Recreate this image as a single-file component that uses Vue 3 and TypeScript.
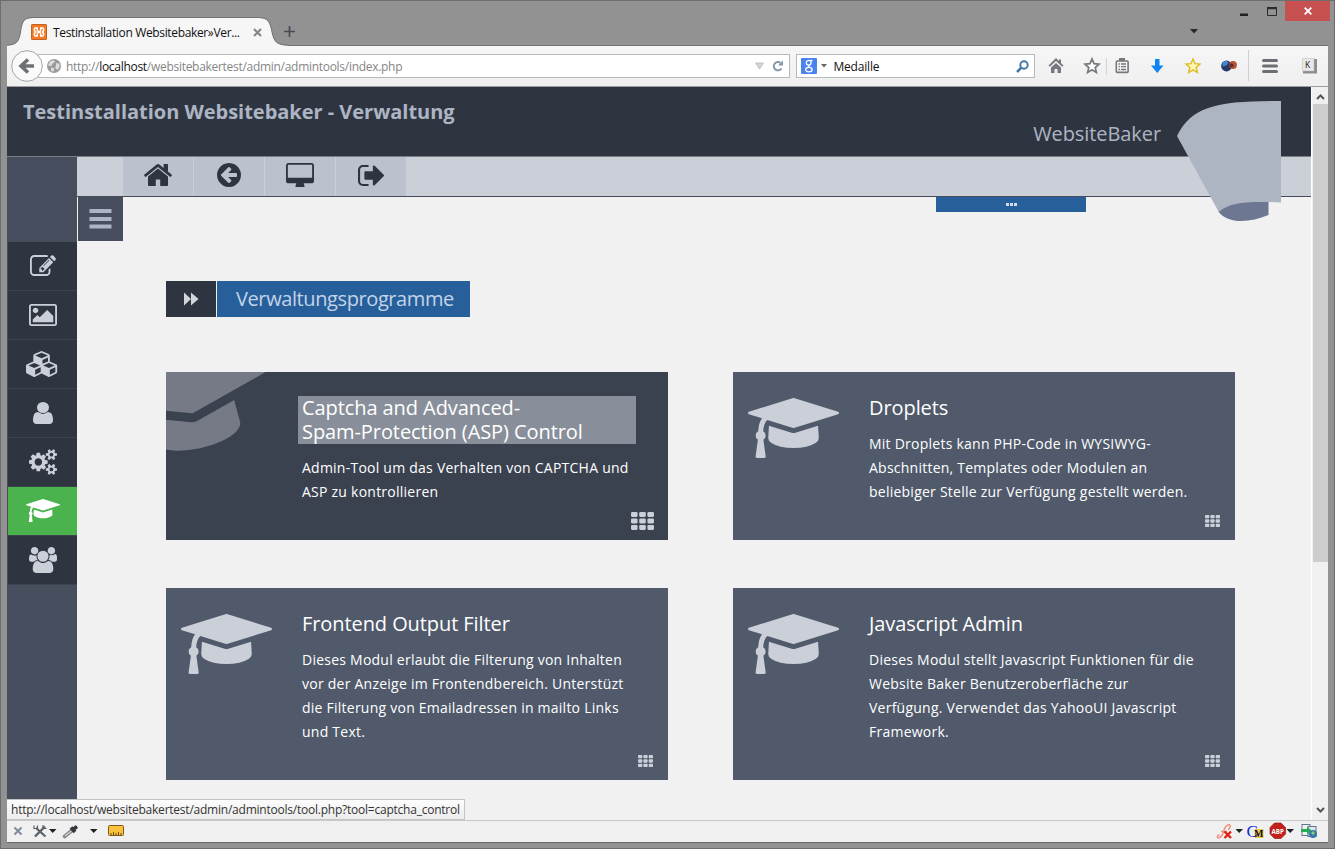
<script setup lang="ts">
interface Glyph {
  box: string
  w: number
  h: number
  d: string
}

interface Tool {
  title: string[]
  text: string[]
  active?: boolean
}

const cap =
  'M1774 836l18 316q4 69-82 128t-235 93.5-323 34.5-323-34.5-235-93.5-82-128l18-316 574 181q22 7 48 7t48-7zm530-324q0 23-22 31l-1120 352q-4 1-10 1t-10-1l-652-206q-43 34-71 111.5t-34 178.5q63 36 63 109 0 69-58 107l58 433q2 14-8 25-9 11-24 11h-192q-15 0-24-11-10-11-8-25l58-433q-58-38-58-107 0-73 65-111 11-207 98-330l-333-104q-22-8-22-31t22-31l1120-352q4-1 10-1t10 1l1120 352q22 8 22 31z'

const quick: Glyph[] = [
  {
    box: '89 253 1614 1283',
    w: 28,
    h: 22,
    d: 'M1472 992v480q0 26-19 45t-45 19h-384v-384h-256v384h-384q-26 0-45-19t-19-45v-480q0-1 .5-3t.5-3l575-474 575 474q1 2 1 6zm223-69l-62 74q-8 9-21 11h-3q-13 0-21-7l-692-577-692 577q-12 8-24 7-13-2-21-11l-62-74q-8-10-7-23.5t11-21.5l719-599q32-26 76-26t76 26l244 204v-195q0-14 9-23t23-9h192q14 0 23 9t9 23v408l219 182q10 8 11 21.5t-7 23.5z',
  },
  {
    box: '128 128 1536 1536',
    w: 24,
    h: 24,
    d: 'M1408 960v-128q0-26-19-45t-45-19h-502l189-189q19-19 19-45t-19-45l-91-91q-18-18-45-18t-45 18l-362 362-91 91q-18 18-18 45t18 45l91 91 362 362q18 18 45 18t45-18l91-91q18-18 18-45t-18-45l-189-189h502q26 0 45-19t19-45zm256-64q0 209-103 385.5t-279.5 279.5-385.5 103-385.5-103-279.5-279.5-103-385.5 103-385.5 279.5-279.5 385.5-103 385.5 103 279.5 279.5 103 385.5z',
  },
  {
    box: '-64 0 1920 1664',
    w: 28,
    h: 24,
    d: 'M1728 992v-832q0-13-9.5-22.5t-22.5-9.5h-1600q-13 0-22.5 9.5t-9.5 22.5v832q0 13 9.5 22.5t22.5 9.5h1600q13 0 22.5-9.5t9.5-22.5zm128-832v1088q0 66-47 113t-113 47h-544q0 37 16 77.5t32 71 16 43.5q0 26-19 45t-45 19h-512q-26 0-45-19t-19-45q0-14 16-44t32-70 16-78h-544q-66 0-113-47t-47-113v-1088q0-66 47-113t113-47h1600q66 0 113 47t47 113z',
  },
  {
    box: '64 256 1568 1280',
    w: 26,
    h: 21,
    d: 'M704 1440q0 4 1 20t.5 26.5-3 23.5-10 19.5-20.5 6.5h-320q-119 0-203.5-84.5t-84.5-203.5v-704q0-119 84.5-203.5t203.5-84.5h320q13 0 22.5 9.5t9.5 22.5q0 4 1 20t.5 26.5-3 23.5-10 19.5-20.5 6.5h-320q-66 0-113 47t-47 113v704q0 66 47 113t113 47h312l11.5 1 11.5 3 8 5.5 7 9 2 13.5zm928-544q0 26-19 45l-544 544q-19 19-45 19t-45-19-19-45v-288h-448q-26 0-45-19t-19-45v-384q0-26 19-45t45-19h448v-288q0-26 19-45t45-19 45 19l544 544q19 19 19 45z',
  },
]

const side: (Glyph & { current?: boolean })[] = [
  {
    box: '0 122 1792 1414',
    w: 26,
    h: 21,
    d: 'M888 1184l116-116-152-152-116 116v56h96v96h56zm440-720q-16-16-33 1l-350 350q-17 17-1 33t33-1l350-350q17-17 1-33zm80 594v190q0 119-84.5 203.5t-203.5 84.5h-832q-119 0-203.5-84.5t-84.5-203.5v-832q0-119 84.5-203.5t203.5-84.5h832q63 0 117 25 15 7 18 23 3 17-9 29l-49 49q-14 14-32 8-23-6-45-6h-832q-66 0-113 47t-47 113v832q0 66 47 113t113 47h832q66 0 113-47t47-113v-126q0-13 9-22l64-64q15-15 35-7t20 29zm-96-738l288 288-672 672h-288v-288zm444 132l-92 92-288-288 92-92q28-28 68-28t68 28l152 152q28 28 28 68t-28 68z',
  },
  {
    box: '-64 128 1920 1536',
    w: 28,
    h: 22,
    d: 'M576 576q0 80-56 136t-136 56-136-56-56-136 56-136 136-56 136 56 56 136zm1024 384v448h-1408v-192l320-320 160 160 512-512zm96-704h-1600q-13 0-22.5 9.5t-9.5 22.5v1216q0 13 9.5 22.5t22.5 9.5h1600q13 0 22.5-9.5t9.5-22.5v-1216q0-13-9.5-22.5t-22.5-9.5zm160 32v1216q0 66-47 113t-113 47h-1600q-66 0-113-47t-47-113v-1216q0-66 47-113t113-47h1600q66 0 113 47t47 113z',
  },
  {
    box: '0 0 2304 1792',
    w: 33,
    h: 26,
    d: 'M640 1632l384-192v-314l-384 164v342zm-64-454l404-173-404-173-404 173zm1088 454l384-192v-314l-384 164v342zm-64-454l404-173-404-173-404 173zm-448-293l384-165v-266l-384 164v267zm-64-379l441-189-441-189-441 189zm1088 518v416q0 36-19 67t-52 47l-448 224q-25 14-57 14t-57-14l-448-224q-4-2-7-4-2 2-7 4l-448 224q-25 14-57 14t-57-14l-448-224q-33-16-52-47t-19-67v-416q0-38 21.5-70t56.5-48l434-186v-400q0-38 21.5-70t56.5-48l448-192q23-10 50-10t50 10l448 192q35 16 56.5 48t21.5 70v400l434 186q36 16 57 48t21 70z',
  },
  {
    box: '256 128 1280 1536',
    w: 20,
    h: 22,
    d: 'M1536 1399q0 109-62.5 187t-150.5 78h-854q-88 0-150.5-78t-62.5-187q0-85 8.5-160.5t31.5-152 58.5-131 94-89 134.5-34.5q131 128 313 128t313-128q76 0 134.5 34.5t94 89 58.5 131 31.5 152 8.5 160.5zm-256-887q0 159-112.5 271.5t-271.5 112.5-271.5-112.5-112.5-271.5 112.5-271.5 271.5-112.5 271.5 112.5 112.5 271.5z',
  },
  {
    box: '-64 0 1920 1792',
    w: 28,
    h: 26,
    d: 'M832 896q0-106-75-181t-181-75-181 75-75 181 75 181 181 75 181-75 75-181zm768 512q0-52-38-90t-90-38-90 38-38 90q0 53 37.5 90.5t90.5 37.5 90.5-37.5 37.5-90.5zm0-1024q0-52-38-90t-90-38-90 38-38 90q0 53 37.5 90.5t90.5 37.5 90.5-37.5 37.5-90.5zm-384 421v185q0 10-7 19.5t-16 10.5l-155 24q-11 35-32 76 34 48 90 115 7 11 7 20 0 12-7 19-23 30-82.5 89.5t-78.5 59.5q-11 0-21-7l-115-90q-37 19-77 31-11 108-23 155-7 24-30 24h-186q-11 0-20-7.5t-10-17.5l-23-153q-34-10-75-31l-118 89q-7 7-20 7-11 0-21-8-144-133-144-160 0-9 7-19 10-14 41-53t47-61q-23-44-35-82l-152-24q-10-1-17-9.5t-7-19.5v-185q0-10 7-19.5t16-10.5l155-24q11-35 32-76-34-48-90-115-7-11-7-20 0-12 7-20 22-30 82-89t79-59q11 0 21 7l115 90q34-18 77-32 11-108 23-154 7-24 30-24h186q11 0 20 7.5t10 17.5l23 153q34 10 75 31l118-89q8-7 20-7 11 0 21 8 144 133 144 160 0 8-7 19-12 16-42 54t-45 60q23 48 34 82l152 23q10 2 17 10.5t7 19.5zm640 533v140q0 16-149 31-12 27-30 52 51 113 51 138 0 4-4 7-122 71-124 71-8 0-46-47t-52-68q-20 2-30 2t-30-2q-14 21-52 68t-46 47q-2 0-124-71-4-3-4-7 0-25 51-138-18-25-30-52-149-15-149-31v-140q0-16 149-31 13-29 30-52-51-113-51-138 0-4 4-7 4-2 35-20t59-34 30-16q8 0 46 46.5t52 67.5q20-2 30-2t30 2q51-71 92-112l6-2q4 0 124 70 4 3 4 7 0 25-51 138 17 23 30 52 149 15 149 31zm0-1024v140q0 16-149 31-12 27-30 52 51 113 51 138 0 4-4 7-122 71-124 71-8 0-46-47t-52-68q-20 2-30 2t-30-2q-14 21-52 68t-46 47q-2 0-124-71-4-3-4-7 0-25 51-138-18-25-30-52-149-15-149-31v-140q0-16 149-31 13-29 30-52-51-113-51-138 0-4 4-7 4-2 35-20t59-34 30-16q8 0 46 46.5t52 67.5q20-2 30-2t30 2q51-71 92-112l6-2q4 0 124 70 4 3 4 7 0 25-51 138 17 23 30 52 149 15 149 31z',
  },
  { box: '0 128 2304 1536', w: 34, h: 23, d: cap, current: true },
  {
    box: '-64 0 1920 1792',
    w: 28,
    h: 26,
    d: 'M529 896q-162 5-265 128h-134q-82 0-138-40.5t-56-118.5q0-353 124-353 6 0 43.5 21t97.5 42.5 119 21.5q67 0 133-23-5 37-5 66 0 159 90 288zm1071 637q0 120-73 189.5t-194 69.5h-874q-121 0-194-69.5t-73-189.5q0-53 3.5-103.5t14-109 26.5-108.5 43-97.5 62-81 85.5-53.5 111.5-20q10 0 43 21.5t73 48 107 48 135 21.5 135-21.5 107-48 73-48 43-21.5q61 0 111.5 20t85.5 53.5 62 81 43 97.5 26.5 108.5 14 109 3.5 103.5zm-1024-1277q0 106-75 181t-181 75-181-75-75-181 75-181 181-75 181 75 75 181zm704 384q0 159-112.5 271.5t-271.5 112.5-271.5-112.5-112.5-271.5 112.5-271.5 271.5-112.5 271.5 112.5 112.5 271.5zm576 225q0 78-56 118.5t-138 40.5h-134q-103-123-265-128 90-129 90-288 0-29-5-66 66 23 133 23 59 0 119-21.5t97.5-42.5 43.5-21q124 0 124 353zm-128-609q0 106-75 181t-181 75-181-75-75-181 75-181 181-75 181 75 75 181z',
  },
]

const tools: Tool[] = [
  {
    title: ['Captcha and Advanced-', 'Spam-Protection (ASP) Control'],
    text: ['Admin-Tool um das Verhalten von CAPTCHA und', 'ASP zu kontrollieren'],
    active: true,
  },
  {
    title: ['Droplets'],
    text: [
      'Mit Droplets kann PHP-Code in WYSIWYG-',
      'Abschnitten, Templates oder Modulen an',
      'beliebiger Stelle zur Verfügung gestellt werden.',
    ],
  },
  {
    title: ['Frontend Output Filter'],
    text: [
      'Dieses Modul erlaubt die Filterung von Inhalten',
      'vor der Anzeige im Frontendbereich. Unterstüzt',
      'die Filterung von Emailadressen in mailto Links',
      'und Text.',
    ],
  },
  {
    title: ['Javascript Admin'],
    text: [
      'Dieses Modul stellt Javascript Funktionen für die',
      'Website Baker Benutzeroberfläche zur',
      'Verfügung. Verwendet das YahooUI Javascript',
      'Framework.',
    ],
  },
]

const cells = [0, 1, 2, 3, 4, 5, 6, 7, 8].map((i) => ({ x: (i % 3) * 640, y: Math.floor(i / 3) * 512 }))
</script>

<template>
  <div class="window">
    <div class="titlebar">
      <div class="tab">
        <svg class="tab-shape" width="284" height="29" viewBox="0 0 284 29">
          <path d="M0 28.500C9 28.500 12 25 13.500 15C15 4 17 1 26 1H252C260 1 263 4 265 15C267 25 270 28.500 281 28.500V29H0Z" fill="#f6f6f6" />
          <path d="M0 28C9 28 12 25 13.500 15C15 4 17 .5 26 .5H252C260 .5 263 4 265 15C267 25 270 28 281 28" fill="none" stroke="#6f7276" />
        </svg>
        <svg class="favicon" width="16" height="16" viewBox="0 0 16 16">
          <rect width="16" height="16" rx="1.500" fill="#f07a26" />
          <rect x=".5" y=".5" width="15" height="15" rx="1" fill="none" stroke="#c9621f" />
          <path d="M6.300 6V4H4.600Q3.400 4 3.400 5.200V6.500L4.700 8 3.400 9.500V10.800Q3.400 12 4.600 12H6.300V10M9.700 6V4h1.700q1.200 0 1.200 1.200V6.500L11.300 8l1.300 1.500v1.300Q12.600 12 11.400 12H9.700V10M6 6.300Q8 9 10 6.300M6 9.700Q8 7 10 9.700" fill="none" stroke="#fff" stroke-width="1.500" />
        </svg>
        <span class="tab-title">Testinstallation Websitebaker»Ver...</span>
        <svg class="tab-close" width="9" height="9" viewBox="0 0 9 9"><path d="M1 1l7 7M8 1L1 8" stroke="#83878c" stroke-width="2.200" /></svg>
      </div>
      <svg class="plus" width="11" height="11" viewBox="0 0 11 11"><path d="M5.500 0v11M0 5.500h11" stroke="#454c56" stroke-width="1.700" /></svg>
      <svg class="tablist" width="8" height="6" viewBox="0 0 8 6"><path d="M0 1h8L4 5.500z" fill="#26292c" /></svg>
      <div class="controls">
        <svg class="min" width="8" height="3"><rect width="8" height="2.500" y=".5" fill="#222" /></svg>
        <svg class="max" width="10" height="9" viewBox="0 0 10 9"><path d="M.5 1v7.500h9V1" fill="none" stroke="#2b2b2b" stroke-width="1" /><rect width="10" height="2.200" fill="#2b2b2b" /></svg>
        <div class="close"><svg width="8" height="8" viewBox="0 0 8 8"><path d="M.7.7l6.600 6.600M7.300.7L.7 7.300" stroke="#fff" stroke-width="1.800" /></svg></div>
      </div>
    </div>

    <div class="toolbar">
      <svg class="back" width="32" height="32" viewBox="0 0 32 32">
        <circle cx="16" cy="16" r="15.300" fill="#fafafa" stroke="#a3a6aa" />
        <path d="M17 9.500l-7 6.500 7 6.500M10.500 16H23" fill="none" stroke="#6c7176" stroke-width="3.600" />
      </svg>
      <div class="urlbar">
        <svg class="globe" width="14" height="14" viewBox="0 0 14 14">
          <circle cx="7" cy="7" r="7" fill="#9a9a9a" />
          <path d="M3 2.500L6.500 1l1.500 2-2.500 1.500L4.500 7 1 6.500zM9 4l3 .5.800 3L10.500 11 8 8.500 9 6.500zM4 8.500l3.500 1L6 13 4 11.500z" fill="#dedede" />
        </svg>
        <span class="url">http://<b>localhost</b>/websitebakertest/admin/admintools/index.php</span>
        <svg class="drop" width="9" height="8" viewBox="0 0 9 8"><path d="M.6 1h7.800L4.500 7z" fill="#d3d6da" stroke="#b2b6bb" stroke-width=".8" /></svg>
        <svg class="reload" width="12" height="12" viewBox="0 0 12 12"><path d="M9.500 8.500A4.200 4.200 0 1 1 8.500 2.800" fill="none" stroke="#8796a5" stroke-width="1.900" /><path d="M11 .5v5H6z" fill="#8796a5" /></svg>
      </div>
      <div class="search">
        <div class="engine">
          <svg width="16" height="16" viewBox="0 0 16 16"><g fill="none" stroke="#fff" stroke-width="1.300"><circle cx="7.700" cy="4.800" r="2.400" /><ellipse cx="7.900" cy="11.600" rx="3.300" ry="2.300" /><path d="M8.500 7.200q-2 .8 0 2.200M9.500 2.500h2" /></g></svg>
        </div>
        <svg class="engine-drop" width="6" height="4" viewBox="0 0 6 4"><path d="M0 0h6L3 3.500z" fill="#666" /></svg>
        <span class="query">Medaille</span>
        <svg class="lens" width="13" height="13" viewBox="0 0 13 13"><circle cx="8" cy="5" r="3.700" fill="none" stroke="#4475a6" stroke-width="1.900" /><path d="M5.300 7.700L1 12" stroke="#4475a6" stroke-width="2.500" /></svg>
      </div>
      <svg class="actions" width="290" height="32" viewBox="0 0 290 32">
        <g transform="translate(10.500 8)"><path d="M7.500 0L0 7.500l1.300 1.300L7.500 3l6.200 5.800L15 7.500l-2.500-2.600V1.500h-2v1.500z" fill="#75797d" /><path d="M2.500 9.500L7.500 5l5 4.500V15H9v-4H6v4H2.500z" fill="#75797d" /></g>
        <path d="M54 9l2 4.700 5 .4-3.800 3.400 1.200 5-4.400-2.700-4.400 2.700 1.200-5-3.800-3.400 5-.4z" fill="#fff" stroke="#75797d" stroke-width="1.700" />
        <path d="M68.500 8v17" stroke="#d2d2d2" />
        <g fill="none" stroke="#75797d"><rect x="78.300" y="11" width="11.800" height="11.400" rx="1" stroke-width="1.600" /><path d="M81 9.500h6" stroke-width="3" /><path d="M80.500 14h1.500m1 0h5M80.500 16.700h1.500m1 0h5M80.500 19.500h1.500m1 0h5" stroke-width="1.300" /></g>
        <path d="M117 9h4.500v6.500h4L119.200 23 113 15.500h4z" fill="#0e85f2" />
        <path d="M155 9l2 4.700 5 .4-3.800 3.400 1.200 5-4.400-2.700-4.400 2.700 1.200-5-3.800-3.400 5-.4z" fill="#fdf7b5" stroke="#e0bb20" stroke-width="1.400" />
        <circle cx="188.500" cy="16" r="5.400" fill="#273a68" /><path d="M184.500 12.500q3-2.500 6-.5l-2 3.500-4 1z" fill="#4588c9" /><circle cx="195" cy="15" r="3.900" fill="#b65332" /><circle cx="193.500" cy="15.500" r="2" fill="#5b2d31" />
        <path d="M210.500 0v31" stroke="#cfcfcf" />
        <path d="M225.500 10.500h13M225.500 16h13M225.500 21.500h13" stroke="#6b6f73" stroke-width="3" stroke-linecap="round" />
        <rect x="265" y="9" width="14" height="14.500" fill="#8d8d8d" /><rect x="264.500" y="8.500" width="11.500" height="12.500" fill="#e9e9e9" stroke="#b8b8b8" stroke-width=".5" />
        <text x="267" y="18" font-size="8.500" fill="#111">K</text>
      </svg>
    </div>

    <div class="viewport">
      <div class="page">
        <header class="head">
          <h1>Testinstallation Websitebaker - Verwaltung</h1>
          <span class="brand">WebsiteBaker</span>
          <svg class="logo" width="106" height="122" viewBox="0 0 106 122">
            <path d="M41.500 111.700C48 100 68 100 91.500 101V115C72 123 51 124 41.500 111.700Z" fill="#6d7792" />
            <path d="M0 36C15 6 40 .8 104 1V102.500L91 102C68 101.500 51 103 41.800 112Z" fill="#adb4c2" />
          </svg>
        </header>
        <div class="body">
          <nav class="side">
            <div v-for="(g, i) in side" :key="i" class="side-item" :class="{ current: g.current }">
              <svg :width="g.w" :height="g.h" :viewBox="g.box" preserveAspectRatio="none"><path :d="g.d" fill="currentColor" /></svg>
            </div>
          </nav>
          <main class="main">
            <div class="quick">
              <div v-for="(g, i) in quick" :key="i" class="quick-item">
                <svg :width="g.w" :height="g.h" :viewBox="g.box" preserveAspectRatio="none"><path :d="g.d" fill="currentColor" /></svg>
              </div>
            </div>
            <div class="strip">
              <div class="menu">
                <svg width="23" height="20" viewBox="0 0 23 20"><path d="M.5 2h22M.5 10h22M.5 17.500h22" stroke="#adb4c3" stroke-width="4" /></svg>
              </div>
              <div class="handle"><i></i><i></i><i></i></div>
            </div>
            <div class="crumb">
              <div class="crumb-icon">
                <svg width="15" height="14" viewBox="0 0 15 14"><path d="M0 .5L7 7 0 13.500zM7 .5L14.500 7 7 13.500z" fill="#d2d5db" /></svg>
              </div>
              <div class="crumb-text">Verwaltungsprogramme</div>
            </div>
            <div class="cards">
              <article v-for="t in tools" :key="t.title[0]" class="card" :class="{ active: t.active }">
                <svg v-if="t.active" class="big-cap" width="132" height="168" viewBox="0 0 132 168">
                  <path :d="cap" fill="#767a86" transform="translate(28.300 50) rotate(-12) scale(.07) translate(-1152 -1024)" />
                </svg>
                <svg v-else class="cap" width="91" height="60" viewBox="0 128 2304 1536" preserveAspectRatio="none"><path :d="cap" fill="#cbcfd8" /></svg>
                <div class="copy">
                  <h2><span v-for="l in t.title" :key="l">{{ l }}</span></h2>
                  <p><span v-for="l in t.text" :key="l">{{ l }}</span></p>
                </div>
                <svg class="grid" viewBox="0 0 1792 1408" preserveAspectRatio="none">
                  <rect v-for="(c, i) in cells" :key="i" :x="c.x" :y="c.y" width="512" height="384" rx="90" fill="#cbcfd8" />
                </svg>
              </article>
            </div>
          </main>
        </div>
      </div>
      <div class="scroll">
        <svg width="9" height="6" viewBox="0 0 9 6"><path d="M1 5l3.500-3.500L8 5" fill="none" stroke="#555" stroke-width="2" /></svg>
        <div class="thumb"></div>
        <svg class="down" width="9" height="6" viewBox="0 0 9 6"><path d="M1 1l3.500 3.500L8 1" fill="none" stroke="#555" stroke-width="2" /></svg>
      </div>
      <div class="link-status"><span>http://localhost/websitebakertest/admin/admintools/tool.php?tool=captcha_control</span></div>
    </div>

    <div class="addons">
      <svg width="120" height="21" viewBox="0 0 120 21">
        <path d="M7.500 6.500l7 7M14.500 6.500l-7 7" stroke="#7e8b98" stroke-width="2" />
        <path d="M28 15.500L38 5.500" stroke="#596269" stroke-width="2.400" /><path d="M29 7l9.500 8.500" stroke="#596269" stroke-width="2.200" /><path d="M27 4.500v3h3.500v-3M36 4v3.500h3.500" fill="none" stroke="#596269" stroke-width="1.200" />
        <path d="M42 8h7.500L45.700 12z" fill="#1e2227" />
        <path d="M57.500 15.500l7.500-6" stroke="#858585" stroke-width="3.600" stroke-linecap="round" /><path d="M58 15l6.500-5" stroke="#d3d3d3" stroke-width="1.300" /><path d="M64 6.500l4 4.500M66 8.500l4-3" stroke="#34383c" stroke-width="3.600" />
        <path d="M83 8h7.500L86.700 12z" fill="#1e2227" />
        <rect x="101.500" y="4.500" width="15" height="10" rx="1" fill="#f8c13e" stroke="#7d5a12" /><path d="M104 14v-2m2.500 2v-3m2.500 3v-2m2.500 2v-3m2.500 3v-2" stroke="#6d4c0c" />
      </svg>
      <svg class="right" width="112" height="21" viewBox="0 0 112 21">
        <path d="M1.500 17q4.500 0 6-6.500T14 3.500M1.500 17q-1-3 2-3M12 8.500q2-.5 2.500-4.500M5 10.500h6" fill="none" stroke="#ee8a76" stroke-width="1.300" /><path d="M8.500 10.500l6.500 6.500M15 10.500L8.500 17" stroke="#df2213" stroke-width="2.400" />
        <path d="M19.500 8H27l-3.800 4z" fill="#1e2227" />
        <rect x="39" y="8" width="8.500" height="9" fill="#f0c655" />
        <text x="30.500" y="16" class="serif" font-size="17" fill="#1226da">C</text><text x="38" y="15.500" class="serif" font-size="10" font-weight="bold" fill="#111">M</text>
        <path d="M58.500 2h6.500l4.500 4.500v6.500L65 17.500h-6.500L54 13V6.500z" fill="#c3201a" stroke="#981c17" stroke-width=".7" />
        <text x="55.500" y="12.500" font-size="7" font-weight="bold" fill="#fff" textLength="12.500" lengthAdjust="spacingAndGlyphs">ABP</text>
        <path d="M70.500 8H78l-3.800 4z" fill="#1e2227" />
        <rect x="86" y="3.500" width="8" height="11" fill="#eef3f6" stroke="#60758a" /><rect x="92" y="5.500" width="8" height="10" fill="#dfe8ee" stroke="#60758a" />
        <path d="M85 8h6V5.500l4.500 4L91 13.500V11h-6z" fill="#2daa55" /><circle cx="97" cy="13" r="4" fill="#3577ad" /><path d="M95 12l2-2 2 2-2 2z" fill="#8dcd75" />
      </svg>
    </div>
  </div>
</template>

<style>
html,
body {
  margin: 0;
  overflow: hidden;
}
</style>

<style scoped>
.window {
  box-sizing: border-box;
  width: 1335px;
  height: 849px;
  padding: 0 6px 0 6px;
  border: 1px solid #6d6d6d;
  background: #929292;
  display: flex;
  flex-direction: column;
  font-family: 'Open Sans', 'Noto Sans', sans-serif;
  font-size: 12px;
}
.window svg {
  display: block;
  flex: none;
}
.titlebar {
  height: 44px;
  flex: none;
  display: flex;
  align-items: flex-start;
  position: relative;
}
.tab {
  position: relative;
  width: 275px;
  height: 28px;
  margin-top: 16px;
  display: flex;
  align-items: center;
}
.tab-shape {
  position: absolute;
  left: 0;
  top: 0;
  z-index: 1;
}
.favicon {
  z-index: 2;
  margin: 2px 0 0 24px;
}
.tab-title {
  z-index: 2;
  width: 186px;
  margin: 2px 0 0 6px;
  white-space: nowrap;
  color: #111;
  letter-spacing: -0.35px;
}
.tab-close {
  z-index: 2;
  margin: 2px 0 0 14px;
}
.plus {
  margin: 25px 0 0 2px;
}
.tablist {
  margin: 27px 0 0 auto;
}
.controls {
  display: flex;
  align-items: center;
  height: 20px;
  margin-left: 42px;
  margin-right: -2px;
}
.controls .min {
  margin-top: 6px;
}
.controls .max {
  margin-left: 19px;
}
.close {
  width: 45px;
  height: 20px;
  margin-left: 8px;
  background: #c75050;
  display: flex;
  align-items: center;
  justify-content: center;
}
.toolbar {
  box-sizing: border-box;
  height: 42px;
  flex: none;
  border-top: 1px solid #6f7276;
  border-bottom: 1px solid #9b9da0;
  background: linear-gradient(#f6f6f6, #efefef);
  display: flex;
  align-items: center;
}
.back {
  margin-left: 4px;
  position: relative;
  z-index: 1;
}
.urlbar {
  box-sizing: border-box;
  width: 754px;
  height: 24px;
  margin-left: -5px;
  padding-left: 8px;
  border: 1px solid #b6babf;
  background: #fff;
  display: flex;
  align-items: center;
}
.url {
  margin-left: 5px;
  padding-top: 1px;
  color: #858585;
  white-space: nowrap;
  letter-spacing: -0.29px;
}
.url b {
  font-weight: 400;
  color: #111;
}
.drop {
  margin-left: auto;
}
.reload {
  margin: 0 5px 0 8px;
}
.search {
  box-sizing: border-box;
  width: 239px;
  height: 24px;
  margin-left: 6px;
  border: 1px solid #b6babf;
  background: #fff;
  display: flex;
  align-items: center;
  color: #111;
}
.engine {
  width: 16px;
  height: 16px;
  margin-left: 4px;
  border-radius: 1px;
  background: #4a83ee;
}
.engine-drop {
  margin: 0 6px 0 4px;
}
.query {
  padding-top: 1px;
  letter-spacing: -0.2px;
}
.lens {
  margin: 0 5px 0 auto;
}
.actions {
  margin-left: 3px;
}
.viewport {
  height: 733px;
  flex: none;
  display: flex;
  position: relative;
}
.page {
  width: 1304px;
  background: #f1f1f1;
  color: #cbcfd8;
}
.head {
  box-sizing: border-box;
  height: 70px;
  border-bottom: 1px solid #7a7c86;
  background: #2f3540;
  display: flex;
  position: relative;
}
.head h1 {
  margin: 11px 0 0 16px;
  font-size: 20px;
  line-height: 28px;
  font-weight: 700;
  letter-spacing: -0.02px;
  color: #adb5c4;
  white-space: nowrap;
}
.brand {
  margin: 32px 150px 0 auto;
  font-size: 20px;
  line-height: 30px;
  letter-spacing: -0.08px;
  color: #adb5c4;
}
.logo {
  position: absolute;
  left: 1170px;
  top: 13px;
  z-index: 3;
}
.body {
  display: flex;
  height: 663px;
}
.side {
  width: 69px;
  padding: 85px 0 0 1px;
  background: #474e5d;
}
.side-item {
  box-sizing: border-box;
  height: 49px;
  padding-bottom: 1px;
  border-bottom: 1px solid #3d4450;
  background: #2f3540;
  display: flex;
  align-items: center;
  justify-content: center;
}
.side-item.current {
  background: #4bb34d;
  color: #fff;
}
.main {
  width: 1234px;
}
.quick {
  box-sizing: border-box;
  height: 40px;
  padding-left: 46px;
  border-bottom: 1px solid #474c59;
  background: #cbcfd8;
  color: #2f3540;
  display: flex;
}
.quick-item {
  box-sizing: border-box;
  width: 71px;
  border-right: 1px solid #cbcfd8;
  background: #bbc1cd;
  display: flex;
  align-items: center;
  justify-content: center;
  padding-bottom: 3px;
}
.strip {
  display: flex;
  height: 84px;
  align-items: flex-start;
}
.menu {
  width: 45px;
  height: 44px;
  margin-left: 1px;
  background: #474e5d;
  display: flex;
  align-items: center;
  justify-content: center;
}
.handle {
  width: 150px;
  height: 15px;
  margin-left: 813px;
  background: #275f9b;
  display: flex;
  align-items: center;
  justify-content: center;
  gap: 1px;
}
.handle i {
  width: 3px;
  height: 3px;
  background: #d5dce8;
}
.crumb {
  display: flex;
  gap: 1px;
  margin-left: 89px;
  height: 36px;
}
.crumb-icon {
  box-sizing: border-box;
  width: 50px;
  padding-bottom: 1px;
  background: #2f3540;
  display: flex;
  align-items: center;
  justify-content: center;
}
.crumb-text {
  box-sizing: border-box;
  width: 253px;
  padding-left: 19px;
  background: #275f9b;
  color: #c3d3e8;
  font-size: 20px;
  line-height: 36px;
  letter-spacing: -0.4px;
  white-space: nowrap;
}
.cards {
  display: grid;
  grid-template-columns: 502px 502px;
  grid-template-rows: 168px 192px;
  gap: 48px 65px;
  margin: 55px 0 0 89px;
}
.card {
  position: relative;
  display: flex;
  overflow: hidden;
  background: #505a6b;
}
.card.active {
  background: #3b424f;
}
.cap {
  margin: 26px 26px 0 15px;
}
.copy {
  padding-top: 24px;
  color: #fff;
  white-space: nowrap;
}
.copy h2 {
  margin: 0;
  padding-left: 4px;
  width: 334px;
  font-size: 20px;
  line-height: 24px;
  font-weight: 400;
  letter-spacing: -0.08px;
}
.active h2 {
  background: #898f9a;
}
.copy p {
  margin: 12px 0 0;
  padding-left: 4px;
  font-size: 14px;
  line-height: 24px;
  letter-spacing: 0.24px;
}
.copy span {
  display: block;
}
.grid {
  position: absolute;
  right: 15px;
  bottom: 13px;
  width: 15px;
  height: 12px;
}
.active .grid {
  right: 14px;
  bottom: 10px;
  width: 23px;
  height: 18px;
}
.scroll {
  box-sizing: border-box;
  width: 17px;
  padding: 7px 0;
  border-left: 1px solid #fff;
  background: #f0f0f0;
  display: flex;
  flex-direction: column;
  align-items: center;
}
.thumb {
  width: 15px;
  height: 458px;
  margin-top: 4px;
  background: #cdcdcd;
}
.down {
  margin-top: auto;
}
.link-status {
  position: absolute;
  left: 0;
  bottom: 0;
  box-sizing: border-box;
  width: 458px;
  height: 21px;
  padding-left: 4px;
  border: 1px solid #c4c4c4;
  border-left: 0;
  background: linear-gradient(#fdfdfd, #ececec);
  color: #333;
  line-height: 20px;
  letter-spacing: -0.23px;
  white-space: nowrap;
}
.addons {
  box-sizing: border-box;
  height: 23px;
  flex: none;
  border-top: 1px solid #c9c9c9;
  border-bottom: 1px solid #696969;
  background: #f0f0f0;
  display: flex;
  justify-content: space-between;
}
.serif {
  font-family: 'Liberation Serif', serif;
}
</style>
